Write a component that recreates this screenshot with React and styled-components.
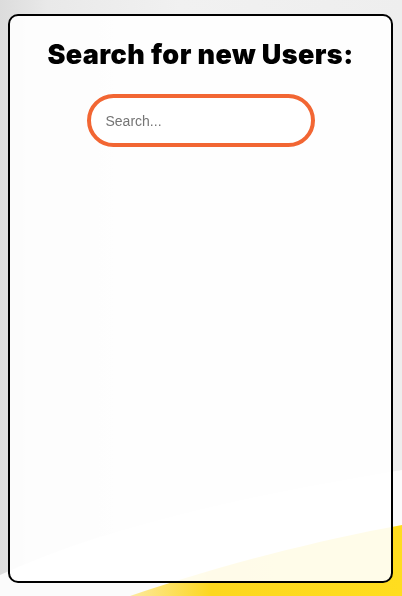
import React from 'react';
import styled, { createGlobalStyle } from 'styled-components';

const GlobalStyle = createGlobalStyle`
  html, body {
    margin: 0;
    padding: 0;
    height: 100%;
  }
  body {
    font-family: Arial, "Liberation Sans", sans-serif;
    background: linear-gradient(90deg, #dcdcdc 0%, #e9e9e9 12%, #f1f1f1 45%, #eeeeee 100%);
    overflow: hidden;
  }
`;

const Backdrop = styled.svg`
  position: fixed;
  left: 0;
  top: 0;
  width: 402px;
  height: 596px;
  z-index: 0;
`;

const Page = styled.div`
  position: relative;
  z-index: 1;
  box-sizing: border-box;
  height: 596px;
  padding: 14px 9px 13px 8px;
  display: flex;
`;

const Card = styled.div`
  flex: 1;
  box-sizing: border-box;
  border: 2px solid #000;
  border-radius: 10px;
  background: rgba(255, 255, 255, 0.9);
  display: flex;
  flex-direction: column;
  align-items: center;
  padding-top: 22px;
`;

const Title = styled.h1`
  margin: 0;
  font-family: Inter, "Open Sans", sans-serif;
  font-weight: 900;
  font-size: 27px;
  line-height: 34px;
  color: #000;
  letter-spacing: 0.4px;
`;

const SearchInput = styled.input`
  margin-top: 22px;
  box-sizing: border-box;
  width: 228px;
  height: 53px;
  border: 4px solid #f26633;
  border-radius: 27px;
  padding: 0 15px;
  font-family: Arial, "Liberation Sans", sans-serif;
  font-size: 14px;
  color: #333;
  background: #fff;
  outline: none;

  &::placeholder {
    color: #757575;
  }
`;

export default function App() {
  return (
    <>
      <GlobalStyle />
      <Backdrop viewBox="0 0 402 596" preserveAspectRatio="none">
        <defs>
          <linearGradient id="yel" x1="0" y1="0" x2="1" y2="0">
            <stop offset="0" stopColor="#fde9a0" />
            <stop offset="0.3" stopColor="#fcd71e" />
            <stop offset="1" stopColor="#ffdd1f" />
          </linearGradient>
        </defs>
        <path d="M0 575 C 120 520, 280 490, 402 470 L 402 596 L 0 596 Z" fill="#fbfbfb" />
        <path d="M130 596 C 220 565, 320 540, 402 525 L 402 596 Z" fill="url(#yel)" />
      </Backdrop>
      <Page>
        <Card>
          <Title>Search for new Users:</Title>
          <SearchInput type="text" placeholder="Search..." />
        </Card>
      </Page>
    </>
  );
}
